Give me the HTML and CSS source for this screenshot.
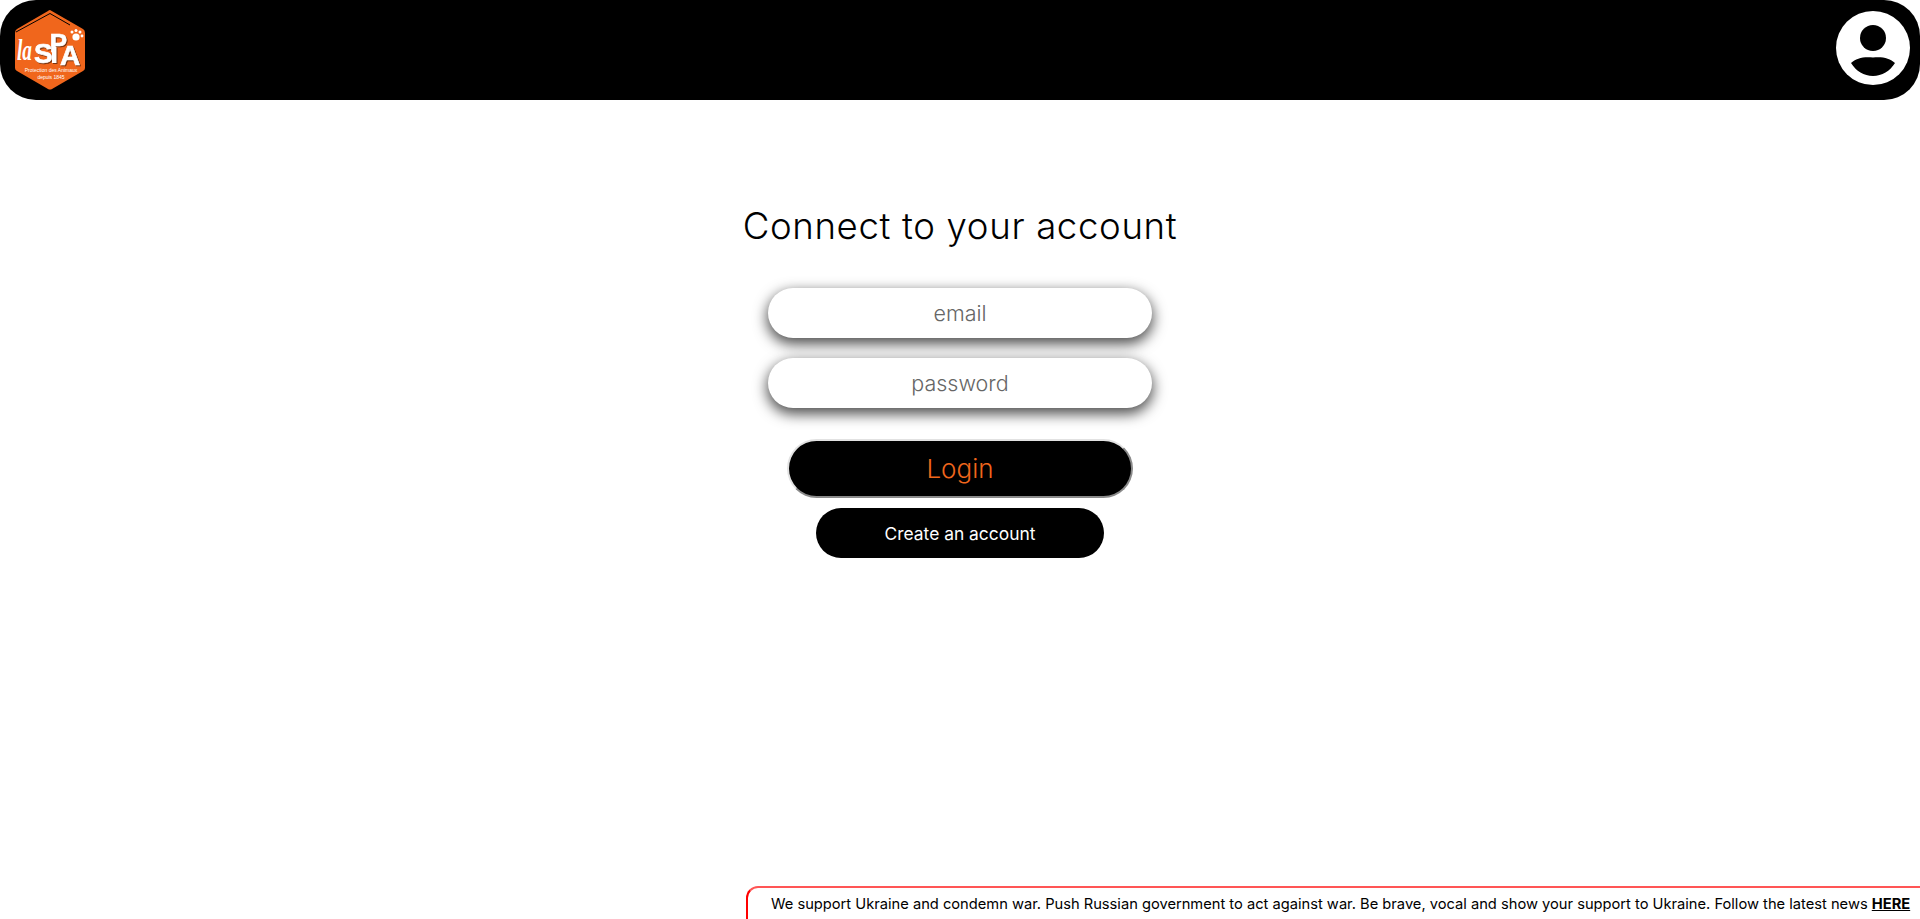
FILE: index.html
```html
<!doctype html>
<html>
<head>
  <title>Connect to your account</title>
  <link rel="stylesheet" href="styles.css">
</head>
<body>

  <header class="topbar">
    <a class="logo" href="#">
      <svg width="72" height="82" viewBox="0 0 72 82">
        <path d="M36 1 L69 20 Q71 21 71 24 L71 59 Q71 61 69 62 L38 80 Q36 81 34 80 L3 62 Q1 61 1 59 L1 24 Q1 21 3 20 L34 2 Q35 1 36 1 Z" fill="#f0661c"/>
        <path d="M2 23 L36 4.5 L56 16" fill="none" stroke="#000" stroke-width="1"/>
        <text class="logo-la" x="3" y="51" textLength="15" lengthAdjust="spacingAndGlyphs">la</text>
        <g class="logo-letters">
          <rect x="38" y="38" width="4.5" height="16" fill="#fff"/>
          <text class="logo-spa" x="20" y="54">S<tspan class="logo-p" dx="-3" dy="-11">P</tspan><tspan dx="-7" dy="13">A</tspan></text>
        </g>
        <circle cx="62" cy="28" r="3.6" fill="#fff"/>
        <circle cx="58" cy="23" r="1.5" fill="#fff"/>
        <circle cx="62" cy="21.5" r="1.5" fill="#fff"/>
        <circle cx="66" cy="23" r="1.5" fill="#fff"/>
        <circle cx="68" cy="27" r="1.4" fill="#fff"/>
        <text class="logo-small" x="37" y="63">Protection des Animaux</text>
        <text class="logo-small" x="37" y="70">depuis 1845</text>
      </svg>
    </a>
    <a class="avatar" href="#">
      <svg width="74" height="74" viewBox="0 0 74 74">
        <circle cx="37" cy="37" r="37" fill="#fff"/>
        <circle cx="37" cy="27" r="13" fill="#000"/>
        <path d="M15 52 C20 47 28 45.5 37 46.5 C46 45.5 54 47 59 52 C54 60 46 65 37 65 C28 65 20 60 15 52 Z" fill="#000"/>
      </svg>
    </a>
  </header>

  <main class="login">
    <h1 class="login-title">Connect to your account</h1>
    <input class="field" type="text" placeholder="email">
    <input class="field" type="password" placeholder="password">
    <button class="btn-login">Login</button>
    <button class="btn-create">Create an account</button>
  </main>

  <div class="notice">
    We support Ukraine and condemn war. Push Russian government to act against war. Be brave, vocal and show your support to Ukraine. Follow the latest news <a href="#">HERE</a>
  </div>

</body>
</html>
```

FILE: styles.css
```css
body {
  margin: 0;
  height: 919px;
  overflow: hidden;
  background: #fff;
  font-family: Inter, "Open Sans", sans-serif;
  color: #000;
}

.topbar {
  display: flex;
  justify-content: space-between;
  align-items: flex-start;
  height: 100px;
  padding: 9px 10px 0 14px;
  box-sizing: border-box;
  background: #000;
  border-radius: 36px;
}

.logo, .avatar {
  display: block;
  line-height: 0;
}

.avatar {
  margin-top: 2px;
}

.logo-la {
  font-family: "Liberation Serif", serif;
  font-style: italic;
  font-weight: 700;
  font-size: 30px;
  fill: #fff;
}

.logo-letters {
  filter: drop-shadow(1px 1px 0 #7a3510);
}

.logo-spa {
  font-family: "Liberation Sans", sans-serif;
  font-weight: 700;
  font-size: 28px;
  fill: #fff;
  stroke: #fff;
  stroke-width: 0.7px;
}

.logo-p {
  font-size: 26px;
}

.logo-small {
  font-family: "Liberation Sans", sans-serif;
  font-size: 5px;
  fill: #fff;
  text-anchor: middle;
}

.login {
  display: flex;
  flex-direction: column;
  align-items: center;
  padding-top: 103px;
}

.login-title {
  margin: 0 0 39px;
  font-size: 36.6px;
  font-weight: 300;
  line-height: 46px;
  letter-spacing: 0.65px;
}

.field {
  display: block;
  width: 384px;
  height: 50px;
  margin-bottom: 20px;
  padding: 0 20px;
  box-sizing: border-box;
  border: 0;
  border-radius: 25px;
  background: #fff;
  box-shadow: 0 5px 14px 1px rgba(0, 0, 0, 0.7);
  font-family: inherit;
  font-size: 21.5px;
  font-weight: 300;
  text-align: center;
  outline: none;
}

.field::placeholder {
  color: #666;
}

.btn-login {
  width: 346px;
  height: 59px;
  margin-top: 11px;
  border: 2px solid;
  border-color: #e2e2e2 #8a8a8a #8a8a8a #e2e2e2;
  border-radius: 30px;
  background: #000;
  color: #f0661c;
  font-family: inherit;
  font-size: 26px;
  font-weight: 300;
}

.btn-create {
  width: 288px;
  height: 50px;
  margin-top: 10px;
  border: 0;
  border-radius: 25px;
  background: #000;
  color: #fff;
  font-family: inherit;
  font-size: 17.4px;
  font-weight: 400;
}

.notice {
  position: fixed;
  right: 0;
  bottom: 0;
  left: 746px;
  height: 33px;
  padding: 6px 0 0 23px;
  box-sizing: border-box;
  border: 2px solid #f00;
  border-top-color: #f55;
  border-width: 2px 0 0 2px;
  border-top-left-radius: 12px;
  background: #fff;
  font-size: 14.68px;
  line-height: 20px;
  white-space: nowrap;
}

.notice a {
  color: #000;
  font-weight: 700;
}
```
